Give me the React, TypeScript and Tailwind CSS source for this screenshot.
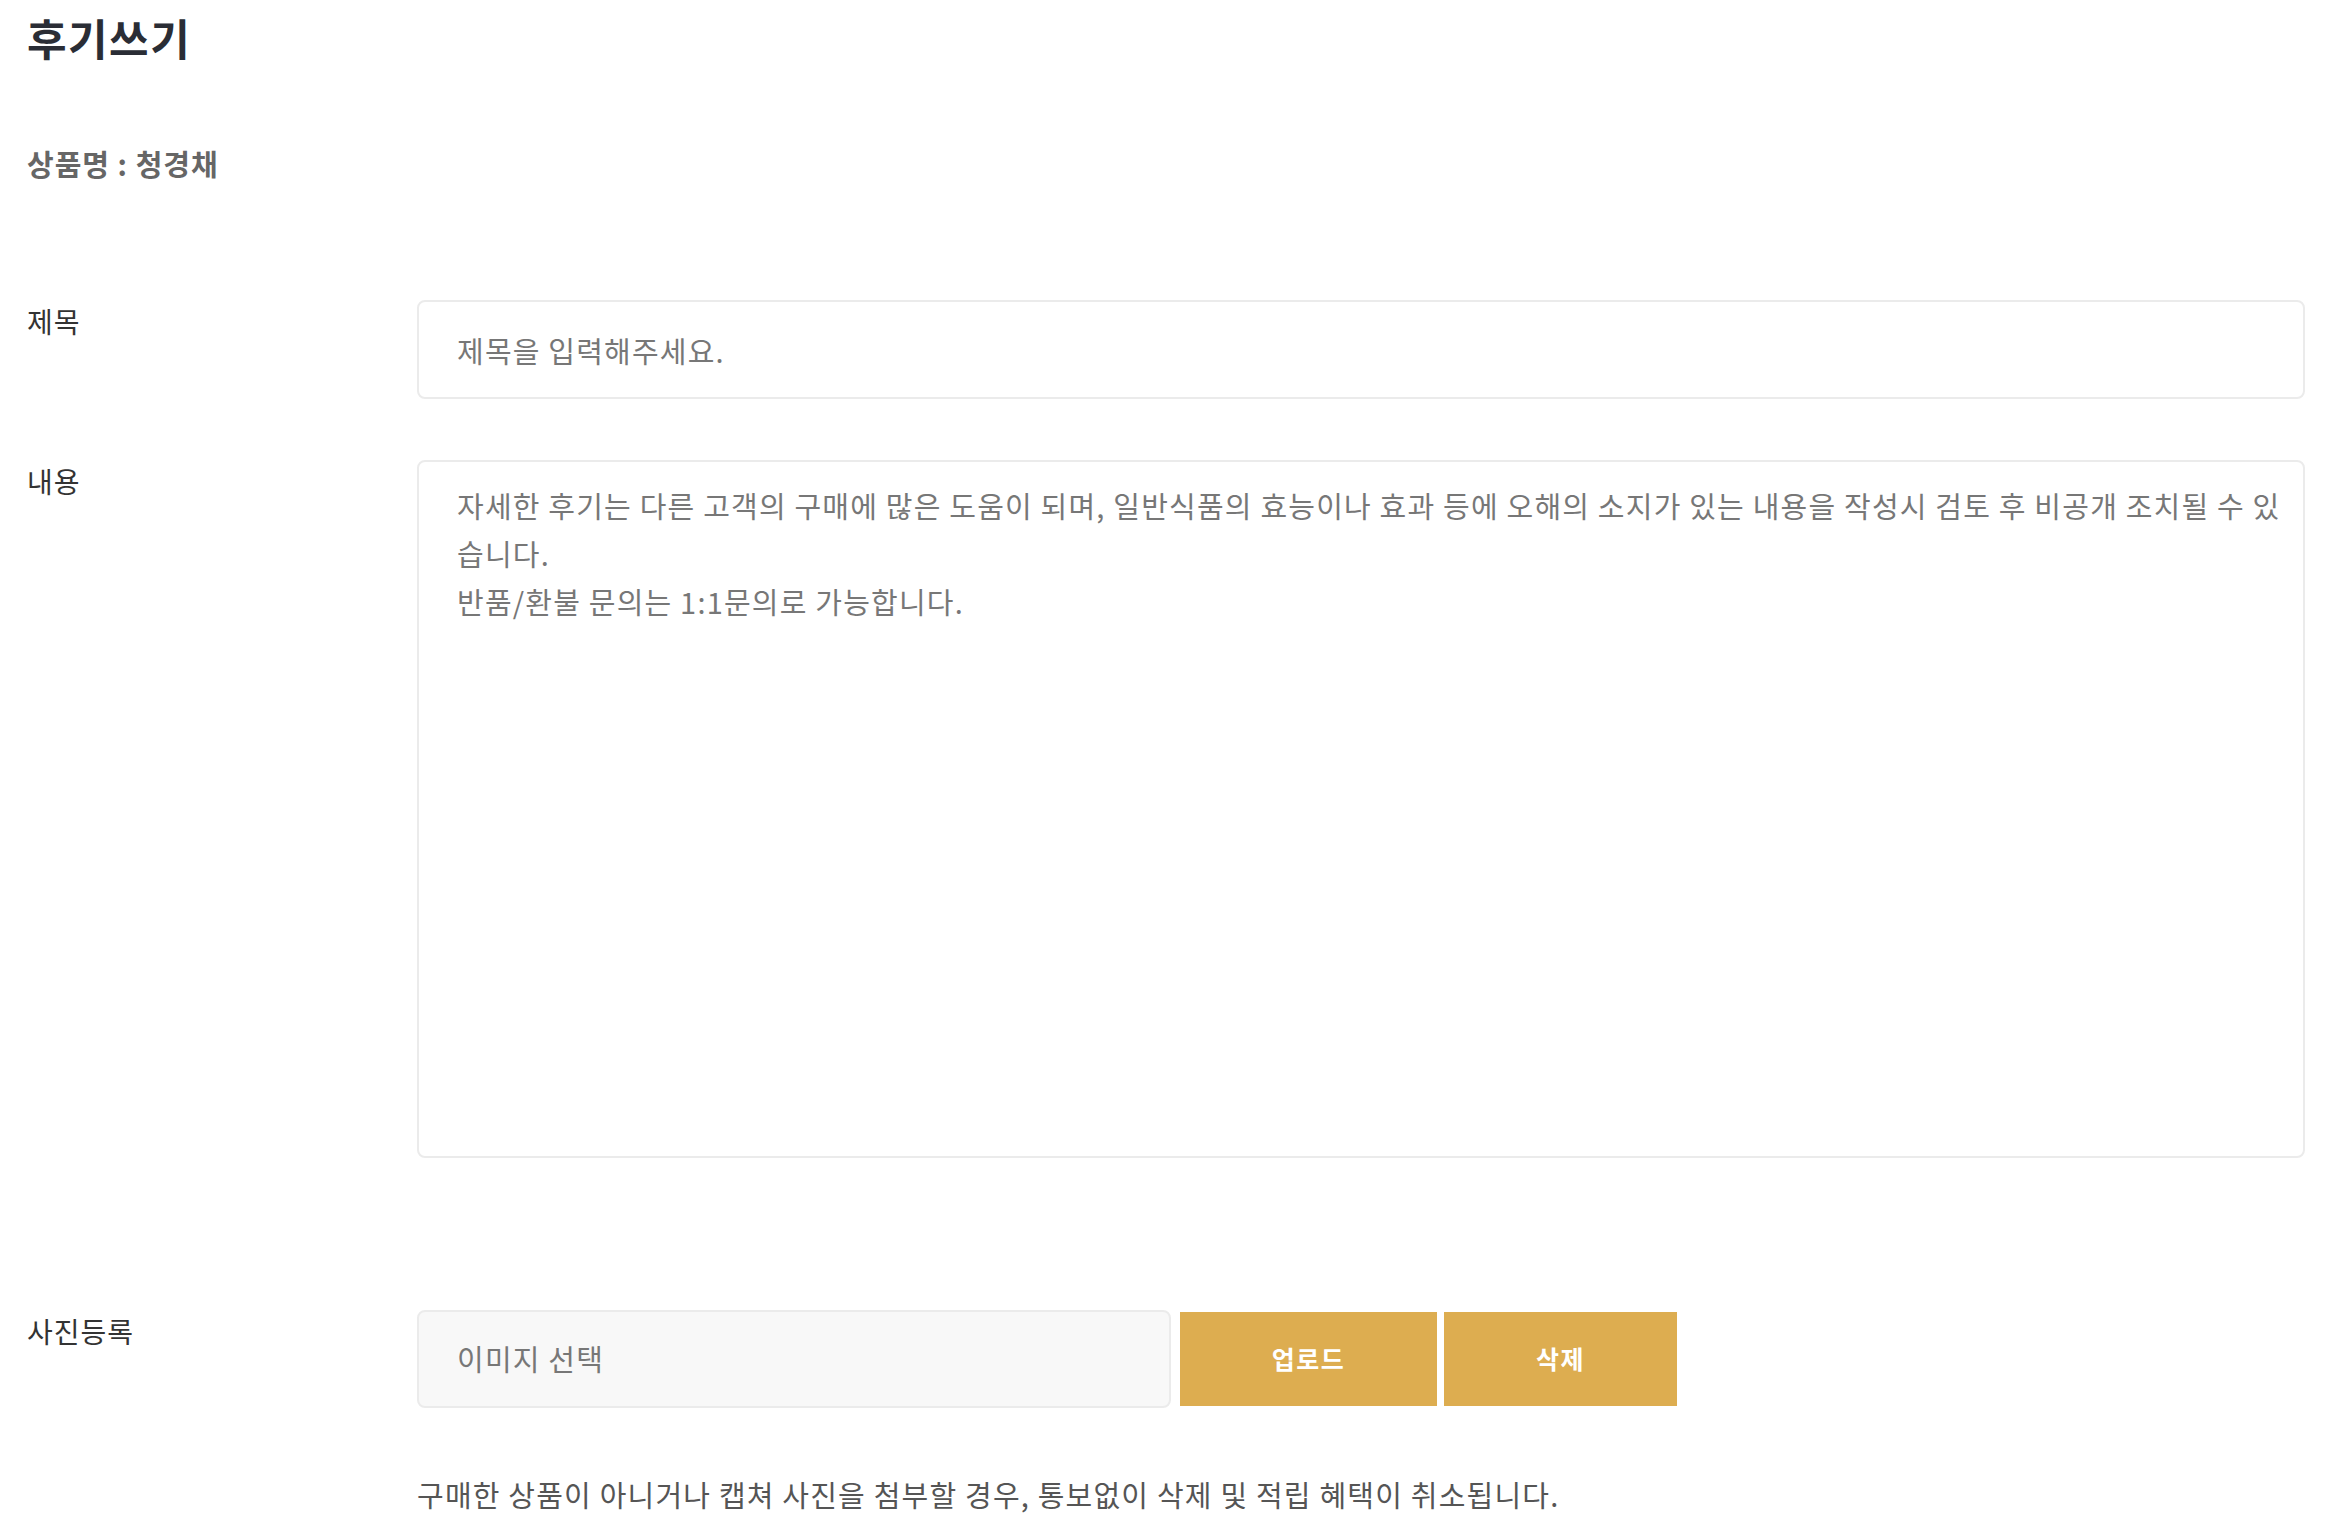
import React from 'react';

// 후기쓰기 form
const FONT = "font-['Noto_Sans_CJK_KR',sans-serif]";

const Label: React.FC<{ children: React.ReactNode }> = ({ children }) => (
  <div className="w-[390px] shrink-0 text-[28px] leading-[42px] tracking-[1px] text-[#333]">{children}</div>
);

const App: React.FC = () => {
  const guide =
    '자세한 후기는 다른 고객의 구매에 많은 도움이 되며, 일반식품의 효능이나 효과 등에 오해의 소지가 있는 내용을 작성시 검토 후 비공개 조치될 수 있습니다.\n반품/환불 문의는 1:1문의로 가능합니다.';

  return (
    <div className={`${FONT} min-h-screen bg-white pl-[27px] pr-[37px] pt-[12px]`}>
      <h1 className="text-[43px] font-bold leading-[50px] tracking-[1.5px] text-[#2a2d35]">후기쓰기</h1>
      <p className="mt-[80px] text-[29px] font-bold leading-[42px] tracking-[1px] text-[#666]">상품명 : 청경채</p>

      <div className="mt-[116px]">
        {/* 제목 */}
        <div className="flex">
          <Label>제목</Label>
          <input
            type="text"
            placeholder="제목을 입력해주세요."
            className="h-[99px] flex-1 rounded-[8px] border-2 border-[#ebebeb] bg-white pl-[38px] pr-[20px] text-[29px] tracking-[1.2px] text-[#555] outline-none placeholder:text-[#777]"
          />
        </div>

        {/* 내용 */}
        <div className="mt-[61px] flex">
          <Label>내용</Label>
          <textarea
            placeholder={guide}
            className="h-[698px] flex-1 resize-none rounded-[8px] border-2 border-[#ebebeb] bg-white pl-[38px] pr-[8px] pt-[19px] text-[29px] leading-[48px] tracking-[1.2px] text-[#555] outline-none placeholder:text-[#777]"
          />
        </div>

        {/* 사진등록 */}
        <div className="mt-[152px] flex">
          <Label>사진등록</Label>
          <div className="flex items-center">
            <div className="flex h-[98px] w-[754px] items-center rounded-[8px] border-2 border-[#ebebeb] bg-[#f8f8f8] pl-[38px] text-[29px] tracking-[1.2px] text-[#777]">
              이미지 선택
            </div>
            <button className="ml-[9px] h-[94px] w-[257px] bg-[#ddad50] text-[25px] font-bold tracking-[1.5px] text-white">
              업로드
            </button>
            <button className="ml-[7px] h-[94px] w-[233px] bg-[#ddad50] text-[25px] font-bold tracking-[1.5px] text-white">
              삭제
            </button>
          </div>
        </div>

        <p className="ml-[390px] mt-[65px] text-[29px] leading-[42px] tracking-[1.2px] text-[#555]">
          구매한 상품이 아니거나 캡쳐 사진을 첨부할 경우, 통보없이 삭제 및 적립 혜택이 취소됩니다.
        </p>
      </div>
    </div>
  );
};

export default App;
